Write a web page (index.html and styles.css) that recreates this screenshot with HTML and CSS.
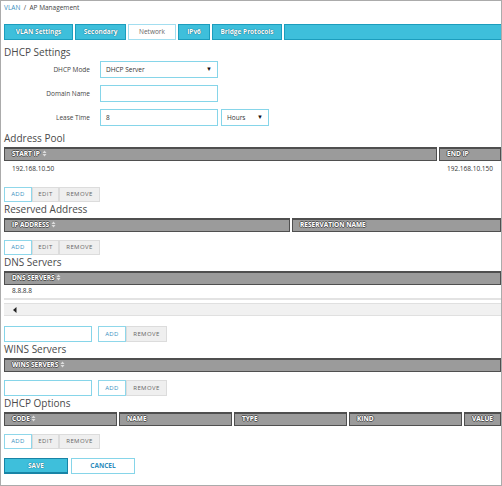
FILE: index.html
```html
<!doctype html>
<html>
  <head>
    <meta charset="utf-8">
    <title>AP Management - Network</title>
    <link rel="stylesheet" href="styles.css">
  </head>
  <body>
    <div class="frame">
      <div class="crumbs"><span class="link">VLAN</span> &nbsp;/&nbsp; AP Management</div>
      <div class="tabs">
        <span class="tab t-vlan">VLAN Settings</span>
        <span class="tab t-sec">Secondary</span>
        <span class="tab active t-net">Network</span>
        <span class="tab t-ipv6">IPv6</span>
        <span class="tab t-bridge">Bridge Protocols</span>
        <span class="tab fill"></span>
      </div>

      <h3 class="sec first">DHCP Settings</h3>
      <div class="form">
        <div class="form-row">
          <label>DHCP Mode</label>
          <div class="select wide">DHCP Server<span class="caret">&#9660;</span></div>
        </div>
        <div class="form-row">
          <label>Domain Name</label>
          <div class="input wide"></div>
        </div>
        <div class="form-row">
          <label>Lease Time</label>
          <div class="input wide">8</div>
          <div class="select small">Hours<span class="caret">&#9660;</span></div>
        </div>
      </div>

      <h3 class="sec">Address Pool</h3>
      <div class="thead">
        <div class="th grow">START IP <svg class="sort" width="5" height="7" viewBox="0 0 5 7"><path d="M0.5 3L2.5 0.5L4.5 3Z M0.5 4L2.5 6.5L4.5 4Z" fill="#ddd"/></svg></div>
        <div class="th c-end">END IP</div>
      </div>
      <div class="trow">
        <div class="td grow">192.168.10.50</div>
        <div class="td c-end">192.168.10.150</div>
      </div>
      <div class="btns b-pool">
        <span class="btn add">ADD</span><span class="btn grey">EDIT</span><span class="btn grey rm">REMOVE</span>
      </div>

      <h3 class="sec">Reserved Address</h3>
      <div class="thead">
        <div class="th c-ip">IP ADDRESS <svg class="sort" width="5" height="7" viewBox="0 0 5 7"><path d="M0.5 3L2.5 0.5L4.5 3Z M0.5 4L2.5 6.5L4.5 4Z" fill="#ddd"/></svg></div>
        <div class="th grow">RESERVATION NAME</div>
      </div>
      <div class="btns b-empty">
        <span class="btn add">ADD</span><span class="btn grey">EDIT</span><span class="btn grey rm">REMOVE</span>
      </div>

      <h3 class="sec">DNS Servers</h3>
      <div class="thead">
        <div class="th grow">DNS SERVERS <svg class="sort" width="5" height="7" viewBox="0 0 5 7"><path d="M0.5 3L2.5 0.5L4.5 3Z M0.5 4L2.5 6.5L4.5 4Z" fill="#ddd"/></svg></div>
      </div>
      <div class="trow dns">
        <div class="td grow">8.8.8.8</div>
      </div>
      <div class="scroller"><svg width="4" height="6" viewBox="0 0 4 6"><path d="M3.5 0L0 3L3.5 6Z" fill="#222"/></svg></div>
      <div class="entry e-dns">
        <div class="input short"></div>
        <span class="btn add">ADD</span><span class="btn grey rm">REMOVE</span>
      </div>

      <h3 class="sec">WINS Servers</h3>
      <div class="thead">
        <div class="th grow">WINS SERVERS <svg class="sort" width="5" height="7" viewBox="0 0 5 7"><path d="M0.5 3L2.5 0.5L4.5 3Z M0.5 4L2.5 6.5L4.5 4Z" fill="#ddd"/></svg></div>
      </div>
      <div class="entry e-wins">
        <div class="input short"></div>
        <span class="btn add">ADD</span><span class="btn grey rm">REMOVE</span>
      </div>

      <h3 class="sec">DHCP Options</h3>
      <div class="thead">
        <div class="th c-opt">CODE <svg class="sort" width="5" height="7" viewBox="0 0 5 7"><path d="M0.5 3L2.5 0.5L4.5 3Z M0.5 4L2.5 6.5L4.5 4Z" fill="#ddd"/></svg></div>
        <div class="th c-opt">NAME</div>
        <div class="th c-opt">TYPE</div>
        <div class="th c-opt">KIND</div>
        <div class="th grow">VALUE</div>
      </div>
      <div class="btns b-empty">
        <span class="btn add">ADD</span><span class="btn grey">EDIT</span><span class="btn grey rm">REMOVE</span>
      </div>

      <div class="actions">
        <span class="save">SAVE</span>
        <span class="cancel">CANCEL</span>
      </div>
    </div>
  </body>
</html>
```

FILE: styles.css
```css
* {box-sizing:border-box;}
body {margin:0;background:#fff;font-family:"Open Sans", "Liberation Sans", sans-serif;color:#444;}

.frame {width:502px;height:486px;border:1px solid #ababab;padding-left:3px;overflow:hidden;}

.crumbs {height:23px;line-height:13px;font-size:6.5px;color:#444;}
.crumbs .link {color:#3a8fc0;}

/* tab strip */
.tabs {display:flex;gap:2px;height:16px;}
.tab {height:16px;line-height:14px;border:1px solid #1c9dbd;background:#3ebfdb;color:#fff;font-size:6.5px;font-weight:bold;
  text-align:center;text-shadow:0 0 1px #1a6f86, 0 0 1px #1a6f86;}
.tab.active {background:#fff;border-color:#a3def0;color:#666;font-weight:normal;text-shadow:none;}
.t-vlan {width:69px;}
.t-sec {width:51px;}
.t-net {width:48px;}
.t-ipv6 {width:32px;}
.t-bridge {width:70px;}
.tab.fill {flex:1;margin-right:-2px;}

.sec {margin:0;height:14px;line-height:14px;font-size:10px;font-weight:normal;color:#4a4a4a;}
.sec.first {margin-top:5px;}

/* form */
.form {margin-top:2px;}
.form-row {display:flex;align-items:center;height:17px;margin-bottom:7px;}
.form-row:last-child {margin-bottom:5px;}
.form-row label {width:86px;text-align:right;font-size:6.5px;color:#444;margin-right:10px;}
.input, .select {height:17px;border:1px solid #86d5e9;font-size:6.5px;line-height:15px;padding-left:5px;color:#333;position:relative;}
.wide {width:118px;}
.small {width:48px;margin-left:3px;}
.short {width:88px;height:16px;margin-right:6px;}
.caret {position:absolute;right:5px;top:0;font-size:6px;color:#111;}

/* grid headers */
.thead {display:flex;gap:2px;margin-top:2px;height:14px;}
.th {height:14px;background:#9b9b9b;border:1px solid #4f4f4f;border-top-width:2px;color:#fff;font-size:6.5px;font-weight:bold;
  line-height:10px;padding-left:7px;white-space:nowrap;overflow:hidden;
  text-shadow:1px 0 0 #555, -1px 0 0 #555, 0 1px 0 #555, 0 -1px 0 #555;}
.th .sort {vertical-align:-1px;}
.grow {flex:1;}
.c-end {width:62px;}
.c-ip {width:286px;}
.c-opt {width:113px;}

.trow {display:flex;gap:2px;height:15px;line-height:15px;font-size:6.5px;color:#333;}
.td {padding-left:8px;}
.trow.dns {height:15px;line-height:12px;border-bottom:2px solid #e3e3e3;}
.scroller {margin-top:3px;height:13px;background:#f1f1f1;border-top:1px solid #e0e0e0;border-bottom:1px solid #e0e0e0;padding-left:9px;}
.scroller svg {display:block;margin-top:3px;}

/* buttons */
.btns {display:flex;height:15px;}
.b-pool {margin-top:11px;}
.b-empty {margin-top:8px;}
.btn {height:15px;line-height:13px;font-size:6px;letter-spacing:0.4px;text-align:center;border:1px solid #dcdcdc;}
.btn.add {width:28px;background:#fff;border-color:#8fd7ea;color:#3a8fc0;}
.btns .btn.grey {width:27px;background:#efefef;color:#666;}
.btns .btn.rm {width:41px;}
.entry {display:flex;align-items:center;height:16px;}
.entry .btn {height:16px;line-height:14px;}
.entry .btn.rm {width:41px;background:#efefef;color:#666;}
.e-dns {margin-top:10px;}
.e-wins {margin-top:8px;}

.actions {display:flex;gap:3px;margin-top:9px;}
.save, .cancel {width:64px;height:16px;line-height:13px;font-size:6.5px;font-weight:bold;text-align:center;}
.save {background:#3ebfdb;border:1px solid #1884a6;border-bottom-width:2px;color:#fff;text-shadow:0 0 1px #1a6f86, 0 0 1px #1a6f86;}
.cancel {background:#fff;border:1px solid #86d5e9;color:#2e8dbd;}
```
